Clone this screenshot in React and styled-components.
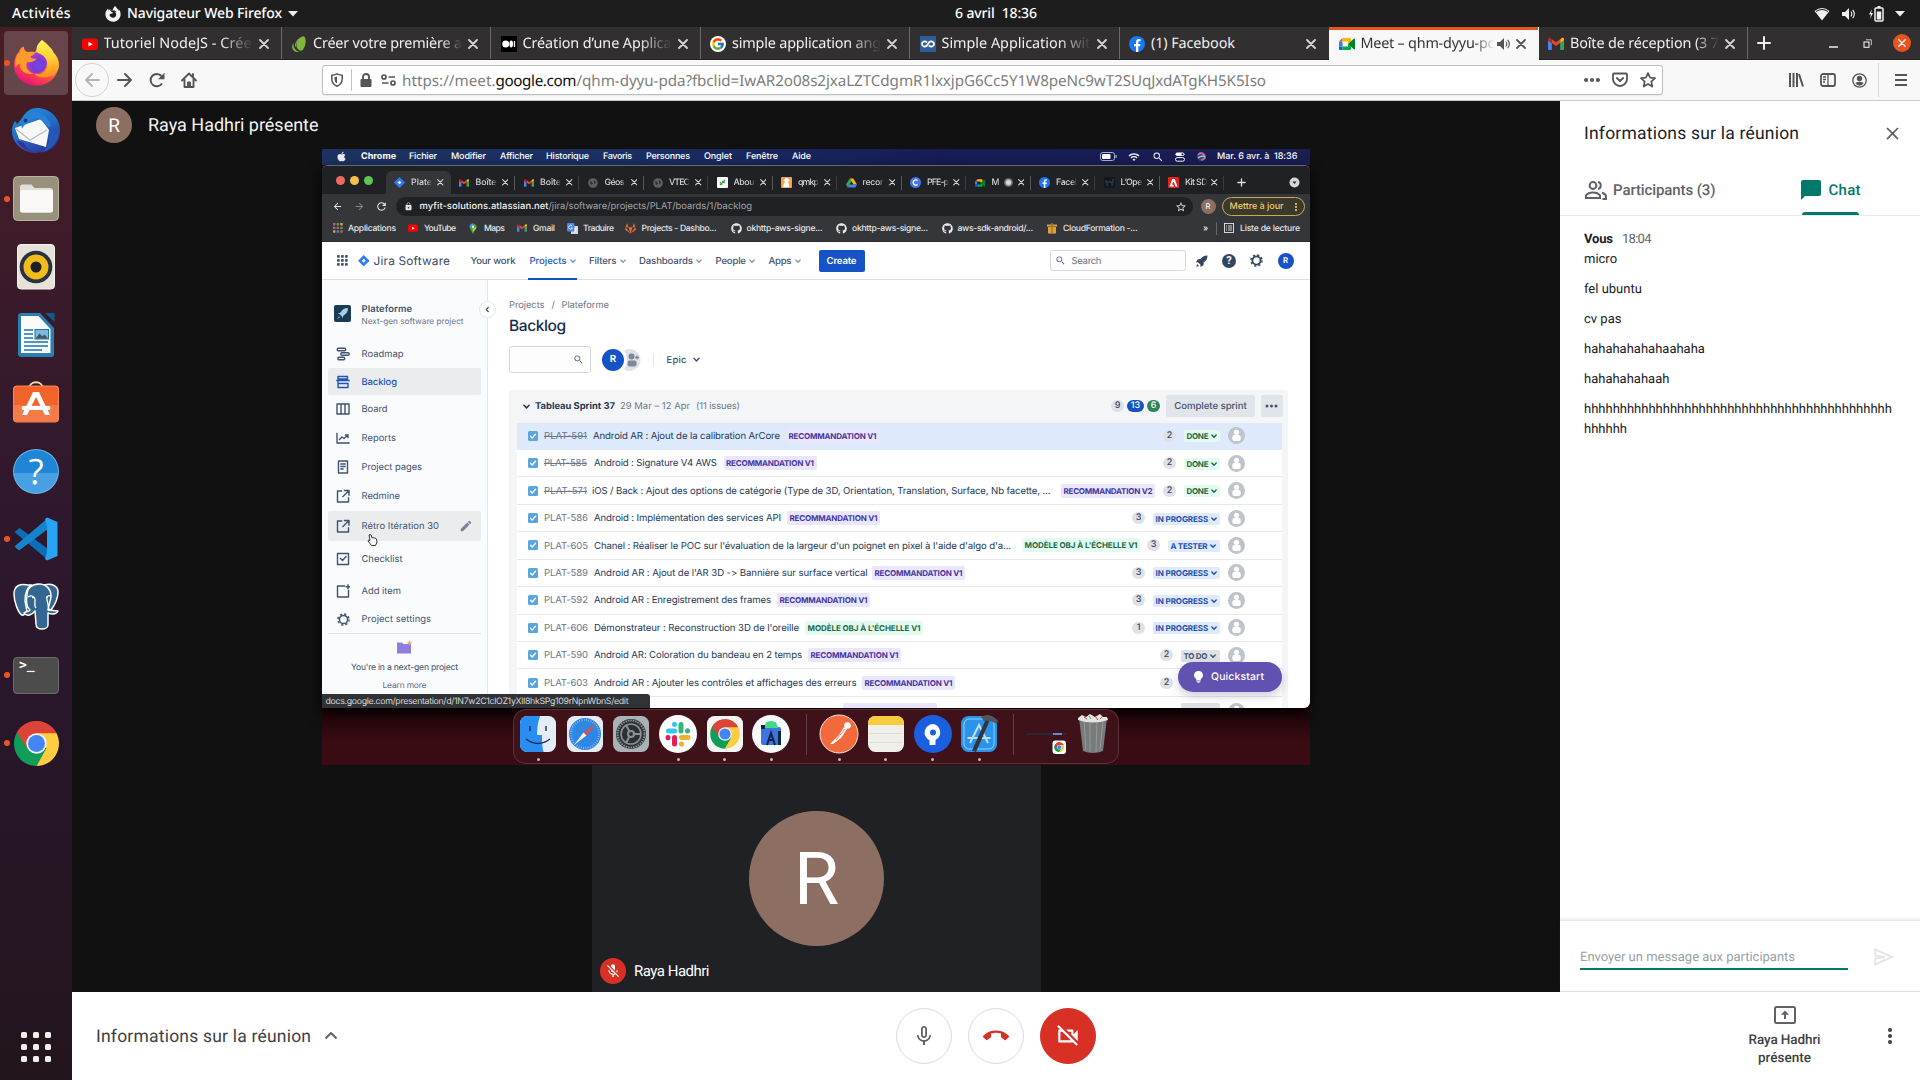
import React from 'react';
import styled, { createGlobalStyle } from 'styled-components';
import { FaApple, FaGithub, FaGitlab, FaFirefoxBrowser } from 'react-icons/fa';
import { FcGoogle } from 'react-icons/fc';
import {
  MdMicNone, MdCallEnd, MdMicOff, MdClose, MdMoreVert, MdOutlineVideocamOff, MdWifi,
  MdLock, MdStarBorder, MdRefresh, MdArrowBack, MdArrowForward, MdSearch, MdEdit,
} from 'react-icons/md';

const UBUNTU = '"Noto Sans", "Open Sans", sans-serif';
const ROBOTO = 'Roboto, "Liberation Sans", sans-serif';
const INTER = 'Inter, Roboto, sans-serif';

const GlobalStyle = createGlobalStyle`
  * { box-sizing: border-box; }
  html, body { margin: 0; padding: 0; background: #111; overflow: hidden; }
  body { font-family: ${ROBOTO}; text-rendering: geometricPrecision; }
  svg { display: block; flex: none; }
`;

/* ---------- text with a known measure ---------- */
const measurer = document.createElement('canvas').getContext('2d');
const tracking = (text, font, width) => {
  measurer.font = font;
  return (width - measurer.measureText(text).width) / Math.max(1, text.length - 1);
};

const Line = styled.span`
  display: block;
  flex: none;
  width: ${(p) => p.$w}px;
  margin-left: ${(p) => p.$ml || 0}px;
  font: ${(p) => p.$font};
  line-height: ${(p) => p.$lh}px;
  letter-spacing: ${(p) => p.$track.toFixed(3)}px;
  color: ${(p) => p.$color};
  white-space: pre;
  position: relative;
  top: ${(p) => (p.$dy === undefined ? 0.6 : p.$dy)}px;
  text-decoration: ${(p) => (p.$strike ? 'line-through' : 'none')};
  ${(p) => p.$fade && `
    width: ${p.$fade}px;
    overflow: hidden;
    mask-image: linear-gradient(to right, #000 ${p.$fade * (p.$from || 0.78)}px, transparent ${p.$fade}px);
  `}
`;

function Text({ children, w, size = 13, weight = 400, family = ROBOTO, color = '#fff', ml, lh, dy, strike, fade, from }) {
  const font = `${weight} ${size}px ${family}`;
  return (
    <Line $w={w} $ml={ml} $font={font} $lh={lh || Math.round(size * 1.4)} $color={color} $dy={dy}
      $track={tracking(children, font, w)} $strike={strike} $fade={fade} $from={from}>
      {children}
    </Line>
  );
}

const Icon = styled.span`
  display: flex;
  flex: none;
  align-items: center;
  justify-content: center;
  width: ${(p) => p.$s}px;
  height: ${(p) => p.$h || p.$s}px;
  margin-left: ${(p) => p.$ml || 0}px;
  color: ${(p) => p.$color || 'inherit'};
`;

const Push = styled.div`flex: 1;`;

/* ---------- desktop shell ---------- */
const Desktop = styled.div`
  width: 1920px;
  height: 1080px;
  display: flex;
  flex-direction: column;
  overflow: hidden;
`;
const TopBar = styled.header`
  height: 27px;
  flex: none;
  display: flex;
  align-items: center;
  background: #1d1d1d;
  padding: 0 12px;
  color: #f2f2f2;
`;
const Below = styled.div`flex: 1; display: flex; min-height: 0;`;
const Launcher = styled.nav`
  width: 72px;
  flex: none;
  padding: 4px 0 0 4px;
  display: flex;
  flex-direction: column;
  gap: 4px;
  background: linear-gradient(#471d22, #3c1b2a 22%, #2f182d 46%, #28162a 66%, #23151d);
`;
const LaunchItem = styled.div`
  width: 64px;
  height: 64px;
  border-radius: 4px;
  display: flex;
  align-items: center;
  background: ${(p) => (p.$active ? 'rgba(255,255,255,.18)' : 'transparent')};
`;
const RunDot = styled.i`
  width: 6px;
  height: 6px;
  border-radius: 50%;
  margin-right: 2px;
  background: ${(p) => (p.$on ? '#e95420' : 'transparent')};
`;
const AppsGrid = styled.div`
  margin: auto 0 18.500px 17px;
  display: grid;
  grid-template-columns: repeat(3, 6px);
  gap: 6px;
  i { width: 6px; height: 6px; border-radius: 1.5px; background: #efefec; }
`;

const Firefox = () => (
  <svg width="48" height="48" viewBox="0 0 48 48">
    <defs>
      <linearGradient id="ffa" x1=".8" y1=".1" x2=".3" y2="1"><stop offset="0" stopColor="#ffe14a" /><stop offset=".35" stopColor="#ff9a2e" /><stop offset=".65" stopColor="#ff4a3e" /><stop offset="1" stopColor="#e5127d" /></linearGradient>
      <linearGradient id="ffb" x1=".5" y1="0" x2=".6" y2="1"><stop offset="0" stopColor="#fff255" /><stop offset=".5" stopColor="#ffcf34" /><stop offset="1" stopColor="#ff8a22" /></linearGradient>
      <radialGradient id="ffc" cx=".6" cy=".6"><stop offset="0" stopColor="#6a4be0" /><stop offset=".6" stopColor="#7a3bd8" /><stop offset="1" stopColor="#a43ad0" /></radialGradient>
    </defs>
    <path d="M30 1c6 4 9 8 10 13 5 3 7.500 8 6.500 14C45 39 36 46.500 24.500 46.500 12 46.500 2 38 2 26c0-7 3-11.500 5-13 0-1.500 2-4.500 4.500-5.500C12 11 14 12.500 16 13c2-.5 5-.5 7 0z" fill="url(#ffa)" />
    <circle cx="24.500" cy="24" r="10.500" fill="url(#ffc)" />
    <path d="M30 1c-5 4-7 9-4 13 6 2 10 7 9.500 12-.5 7-7 10.500-13 8.500 4 6 20 6 24-5 1.500-6-1-12-5-16-1-5-7-7-11.500-12.500z" fill="url(#ffb)" />
    <path d="M11 9c0 3 2 4 5 4.500 2-.7 5-.6 7 .5-1 2-3 3-4.500 3.500.5 2 2.500 2.500 6.500 2-3 3.500-6 4-9.500 3.500-3 4 0 10 6 11.500-8 2-14-3-14-10-2 1-3 2-4 4C2.500 20 5 15 8.500 13c.3-1.500 1-3 2.500-4z" fill="#ff9a2b" />
  </svg>
);
const Thunderbird = () => (
  <svg width="50" height="50" viewBox="0 0 50 50">
    <defs><linearGradient id="tb" x1=".2" y1="0" x2=".8" y2="1"><stop offset="0" stopColor="#1c8fe0" /><stop offset=".5" stopColor="#2469c4" /><stop offset="1" stopColor="#2b2f95" /></linearGradient></defs>
    <path d="M11 12C15 5 20 2 26 2c13 0 23 10 23 22 0 11-6 20-16 22l-9 1C10 46 1 36 1 25c0-4 1-7 3-10l2 3z" fill="url(#tb)" />
    <path d="M4 22L30 13l8 11-3 17-27-8z" fill="#f7f7f8" />
    <path d="M5 23l14 11 17-10" fill="none" stroke="#b8b8c4" strokeWidth="1.200" />
    <path d="M12 13C16 6 24 4 31 8c6 4 9 9 9 15l-8-7c-5-5-10-5-15 0-3 3-5 4-6 7-1-4-1-7 1-10z" fill="#2a80d4" />
    <circle cx="14.500" cy="14.500" r="2" fill="#123c78" />
    <path d="M38 20c3 8 1 17-6 26 10-3 17-13 16-24-1 5-3 6-5 8 1-6-1-9-5-10z" fill="#2559b8" />
    <path d="M8 35l-2-1c2 6 9 11 16 12-6-3-8-6-9-9z" fill="#392e9c" />
  </svg>
);
const Files = () => (
  <svg width="46" height="46" viewBox="0 0 46 46">
    <rect x=".5" y=".5" width="45" height="44" rx="4" fill="#9a917c" stroke="#b9b3a2" />
    <path d="M7 11q0-2.500 2.500-2.500h9l3 3.500H37q3 0 3 3v19q0 2.500-2.500 2.500h-28Q7 36.500 7 34z" fill="#e2dfd4" />
    <rect x="7" y="14" width="33" height="22.500" rx="2.500" fill="#faf9f8" />
  </svg>
);
const Speaker = () => (
  <svg width="46" height="46" viewBox="0 0 46 46">
    <rect x="4.500" y=".5" width="37" height="44.500" rx="3.500" fill="#e6e2d9" stroke="#f6f3ec" />
    <circle cx="23" cy="23" r="16.300" fill="#2c3140" />
    <circle cx="23" cy="23" r="12.500" fill="#f0bd1a" />
    <circle cx="23" cy="23" r="5.500" fill="#1d2026" />
  </svg>
);
const Writer = () => (
  <svg width="46" height="46" viewBox="0 0 46 46">
    <path d="M8.500 1H27l14 15v26.500q0 2.500-2.500 2.500h-30Q5 45 5 42V4q0-3 3.500-3z" fill="#2a7fb0" />
    <path d="M8 4h17.500L37.500 17v24H8z" fill="#f8fafb" />
    <path d="M32 1h9.500v9z" fill="#0f5a8c" />
    <path d="M11 18h9M11 22h9M11 26h9M11 30h24M11 34h24M11 38h18" stroke="#1b76ab" strokeWidth="1.700" />
    <rect x="22" y="17.500" width="13.500" height="9.500" fill="#7bb8da" stroke="#1b76ab" />
    <path d="M22.500 26.500l4-5 3 3 2-2 3.500 4z" fill="#455560" />
  </svg>
);
const Software = () => (
  <svg width="46" height="46" viewBox="0 0 46 46">
    <path d="M16 9c0-9 14-9 14 0" fill="none" stroke="#f5d7b0" strokeWidth="1.800" />
    <rect x=".5" y="6" width="45" height="36" rx="3" fill="#f2632c" stroke="#f58a58" />
    <path d="M1 25h44v14q0 2.500-2.500 2.500h-39Q1 41.500 1 39z" fill="#f47a48" />
    <path d="M20 12h6l11 23h-5l-2-4-7-14-7 14-2 4H9z" fill="#fff" />
    <rect x="8.500" y="26" width="29" height="4" rx="2" fill="#fff" />
  </svg>
);
const HelpBadge = styled.div`
  width: 46px;
  height: 45px;
  border-radius: 50%;
  border: 1px solid #6cb8ec;
  background: linear-gradient(#1f85d6 53%, #46a0e2 53%);
  color: #fff;
  display: flex;
  align-items: center;
  justify-content: center;
  font: 400 35px/45px "Open Sans", sans-serif;
`;
const VSCode = () => (
  <svg width="46" height="46" viewBox="0 0 46 46">
    <path d="M1.500 17l5-4L35 34v11z" fill="#0a6fb7" transform="translate(0 -1)" />
    <path d="M1.500 30.500l4.500 4L35 13V2z" fill="#1484cf" />
    <path d="M34 1.500l10.500 4.500v34L34 44.500 32 43l2-7V10l-2-7z" fill="#27a3f3" />
  </svg>
);
const Postgres = () => (
  <svg width="48" height="48" viewBox="0 0 48 48">
    <g fill="#336791" stroke="#fff" strokeWidth="1.500" strokeLinejoin="round">
      <path d="M16 2C8 0 2 3 2 11c0 7 4 19 8 21 2 1 3-1 5-4l-2-10c0-7 1-13 7-16z" />
      <path d="M32 2c8-2 14 1 14 7 0 7-4 14-7 18l-7-2z" />
      <path d="M15 12C15 5 20 1 27 1c7 0 12 5 12 12 0 5-3 10-3 14l10 1c-2 4-7 3-10 2v12c0 5-12 6-12-1l-1-13c-3 4-8 6-11 2 2-2 5-1 6-3-4-3-4-9-3-15z" />
    </g>
    <path d="M16 14c3-2 7-1 7 3 0 3-1 6 1 8M39 13c-3-1-5 1-4 4s1 6 2 9" fill="none" stroke="#fff" strokeWidth="1.300" />
    <circle cx="21" cy="14.500" r="1" fill="#fff" /><circle cx="35" cy="14" r="1" fill="#fff" />
  </svg>
);
const TerminalBox = styled.div`
  width: 46px;
  height: 37px;
  border-radius: 4px;
  border: 1px solid #6b6b6b;
  background: #4c4c4c;
  color: #fff;
  padding: 0 0 0 5px;
  font: 700 13px/16px "DejaVu Sans Mono", monospace;
`;
const ChromeLogo = ({ s }) => (
  <svg width={s} height={s} viewBox="0 0 48 48">
    <path d="M24 24L4.100 12.500A23 23 0 0 1 43.900 12.500z" fill="#db4437" />
    <path d="M4.100 12.500A23 23 0 0 0 24 47l10-17.200L24 24z" fill="#0f9d58" />
    <path d="M43.900 12.500A23 23 0 0 1 24 47l10-18-10-16.500z" fill="#ffcd40" />
    <path d="M4.100 12.500L14 29.500 24 34l-5-10 5-10z" fill="#0f9d58" />
    <path d="M24 13.500h20.400A23 23 0 0 0 4.100 12.500L13.500 28 19 15z" fill="#db4437" />
    <circle cx="24" cy="24" r="10.500" fill="#f1f1f1" />
    <circle cx="24" cy="24" r="8.600" fill="#4285f4" />
  </svg>
);

const launcher = [
  [<Firefox />, true, true], [<Thunderbird />, false], [<Files />, true], [<Speaker />, false], [<Writer />, false],
  [<Software />, false], [<HelpBadge>?</HelpBadge>, false], [<VSCode />, true], [<Postgres />, false],
  [<TerminalBox>{'>_'}</TerminalBox>, true], [<ChromeLogo s={47} />, true],
];

/* ---------- Firefox window ---------- */
const Browser = styled.main`flex: 1; min-width: 0; display: flex; flex-direction: column;`;
const TabStrip = styled.div`
  height: 33px;
  flex: none;
  display: flex;
  background: #322f30;
  border-bottom: 1px solid #232122;
`;
const Tab = styled.div`
  width: 209.500px;
  height: ${(p) => (p.$active ? 33 : 32)}px;
  flex: none;
  display: flex;
  align-items: center;
  padding-top: ${(p) => (p.$active ? 0.5 : 1.5)}px;
  padding-left: 9.500px;
  border-right: 1px solid ${(p) => (p.$plain ? 'transparent' : '#69686a')};
  background: ${(p) => (p.$active ? '#f8f8f8' : 'transparent')};
  box-shadow: ${(p) => (p.$active ? 'inset 0 3px #e95420' : 'none')};
`;
const TitleArea = styled.div`width: ${(p) => p.$w}px; flex: none; overflow: hidden; margin-left: 6px;`;
const WinControls = styled.div`flex: 1; display: flex; align-items: center; padding-right: 9px; color: #eee;`;
const CloseDisc = styled.div`
  width: 18px;
  height: 18px;
  margin-left: 21px;
  border-radius: 50%;
  background: #e95420;
  display: flex;
  align-items: center;
  justify-content: center;
`;
const Toolbar = styled.div`
  height: 41px;
  flex: none;
  display: flex;
  align-items: center;
  padding-left: 3px;
  background: #f8f8f8;
  border-bottom: 1px solid #cbcbcb;
  color: #555;
`;
const BackDisc = styled.div`
  width: 34px;
  height: 34px;
  border-radius: 50%;
  border: 1px solid #d2d2d2;
  display: flex;
  align-items: center;
  justify-content: center;
  color: #b3b3b3;
`;
const UrlBar = styled.div`
  width: 1341px;
  height: 30px;
  margin-left: 125px;
  display: flex;
  align-items: center;
  background: #fff;
  border: 1px solid #bdbdbd;
  border-radius: 3px;
  box-shadow: 0 1px 1px rgba(0,0,0,.06);
`;
const UrlText = styled.div`display: flex; margin-left: 6px;`;
const Rule = styled.i`
  flex: none;
  width: 1px;
  height: ${(p) => p.$h}px;
  margin-left: ${(p) => p.$ml || 0}px;
  background: ${(p) => p.$c};
`;

const Stroke = ({ s = 16, vb = 16, sw = 2, d, fill = 'none', cap = 'round' }) => (
  <svg width={s} height={s} viewBox={`0 0 ${vb} ${vb}`} fill={fill} stroke="currentColor" strokeWidth={sw} strokeLinecap={cap} strokeLinejoin="round"><path d={d} /></svg>
);
const CloseX = ({ s = 10, sw = 1.8 }) => <Stroke s={s} vb={10} sw={sw} d="M1 1l8 8M9 1l-8 8" />;
const Chevron = ({ s = 6, sw = 1.2 }) => <Stroke s={s} vb={6} sw={sw} d="M.8 2l2.200 2.200L5.200 2" />;

const YouTube = ({ s = 16 }) => <svg width={s} height={s} viewBox="0 0 16 16"><rect y="2.500" width="16" height="11.500" rx="3" fill="#f00" /><path d="M6.500 5.800v4.800l4.200-2.400z" fill="#fff" /></svg>;
const Envato = () => <svg width="16" height="16" viewBox="0 0 16 16"><path d="M12.500.2C9 .5 4 5 4 9.500 4 11 5 11 5 11S4.500 7 7 4C5 7 4.500 12 8 14c1 1 3 1 4-.5C15.500 9 15.500 1 12.500.2zM2.500 7C0 10 1 15 5.500 16h3C4.500 14.500 2 12 2.500 7z" fill="#7eb83c" /></svg>;
const Medium = () => <svg width="16" height="16" viewBox="0 0 16 16"><rect width="16" height="16" fill="#000" /><circle cx="4.700" cy="8" r="3.500" fill="#fff" /><ellipse cx="10.200" cy="8" rx="1.800" ry="3.400" fill="#fff" /><rect x="12.800" y="5" width="1.300" height="6" fill="#fff" /></svg>;
const Coding = () => <svg width="16" height="16" viewBox="0 0 16 16"><rect width="16" height="16" fill="#2f5f98" /><path d="M7 6.500C5 4.500 2 5.500 2 8s3 3.500 5 1.500L9 6.500c2-2 5-1 5 1.500s-3 3.500-5 1.500" fill="none" stroke="#fff" strokeWidth="1.800" /></svg>;
const Facebook = ({ s = 16 }) => <svg width={s} height={s} viewBox="0 0 16 16"><circle cx="8" cy="8" r="8" fill="#1877f2" /><path d="M7 16v-5.700H5V8h2V6.300C7 4.200 8.200 3.100 10 3.100l1.600.1v2h-1c-1 0-1.300.6-1.300 1.200V8h2.200l-.4 2.300H9.300V16z" fill="#fff" /></svg>;
const MeetLogo = ({ s = 16 }) => <svg width={s} height={s} viewBox="0 0 16 16"><path d="M0 5.500L3.500 2v3.500z" fill="#ea4335" /><path d="M0 5.500h3.500v5H0z" fill="#2684fc" /><path d="M0 10.500V13q0 1 1 1h2.500v-3.500z" fill="#0066da" /><path d="M3.500 2H11q1 0 1 1v2.500L9 8V5.500H3.500z" fill="#ffba00" /><path d="M3.500 10.500H9V8l3 2.500V13q0 1-1 1H3.500z" fill="#00ac47" /><path d="M9 8l5.500-5q1.500-1 1.500.5v9q0 1.500-1.500.5z" fill="#00832d" /></svg>;
const GmailLogo = ({ s = 16 }) => <svg width={s} height={s} viewBox="0 0 16 16"><path d="M1 14h2.800V7L0 4.300V13q0 1 1 1z" fill="#4285f4" /><path d="M12.200 14H15q1 0 1-1V4.300L12.200 7z" fill="#34a853" /><path d="M12.200 3.500V7L16 4.300V3.500c0-1.800-1.500-2-2.500-1.300z" fill="#fbbc04" /><path d="M3.800 7V3.200L8 6.300l4.200-3.100V7L8 10z" fill="#ea4335" /><path d="M0 3.500v.8L3.800 7V3.200L2.500 2.200C1.500 1.500 0 1.700 0 3.500z" fill="#c5221f" /></svg>;
const SpeakerIcon = () => <svg width="14" height="14" viewBox="0 0 14 14"><path d="M0 5h3l4-4v12L3 9H0z" fill="currentColor" /><path d="M8.800 4.500q2 2.500 0 5M10.700 2.800q3.300 4.200 0 8.400" fill="none" stroke="currentColor" strokeWidth="1.100" /></svg>;

const tabs = [
  { icon: <YouTube />, t: 'Tutoriel NodeJS - Crée', w: 148, fade: 149, from: 0.78 },
  { icon: <Envato />, t: 'Créer votre première a', w: 149, fade: 149, from: 0.86 },
  { icon: <Medium />, t: 'Création d’une Applica', w: 149, fade: 149 },
  { icon: <FcGoogle size={16} />, disc: true, t: 'simple application ang', w: 149, fade: 149 },
  { icon: <Coding />, t: 'Simple Application wit', w: 149, fade: 149 },
  { icon: <Facebook />, t: '(1) Facebook', w: 84 },
  { icon: <MeetLogo />, t: 'Meet – qhm-dyyu-pc', w: 134, fade: 134, active: true, from: 0.84 },
  { icon: <GmailLogo />, t: 'Boîte de réception (3 7', w: 149, fade: 149, from: 0.84 },
];
const GoogleDisc = styled.div`
  width: 16px;
  height: 16px;
  border-radius: 50%;
  background: #fff;
  display: flex;
  align-items: center;
  justify-content: center;
`;

/* ---------- Meet ---------- */
const Meeting = styled.div`height: 891px; flex: none; display: flex;`;
const Stage = styled.section`
  width: 1488px;
  flex: none;
  background: #111;
  display: flex;
  flex-direction: column;
`;
const Presenter = styled.div`height: 48px; flex: none; display: flex; align-items: center; padding-left: 24px;`;
const Initial = styled.div`
  width: ${(p) => p.$s}px;
  height: ${(p) => p.$s}px;
  flex: none;
  margin-left: ${(p) => p.$ml || 0}px;
  border-radius: 50%;
  background: ${(p) => p.$bg || '#8d6e63'};
  color: #fff;
  display: flex;
  align-items: center;
  justify-content: center;
  padding-top: ${(p) => (p.$f > 50 ? 2 : 0)}px;
  font: ${(p) => p.$weight || 400} ${(p) => p.$f}px/1 ${ROBOTO};
`;
const Shared = styled.div`
  width: 988px;
  height: 616px;
  flex: none;
  margin-left: 250px;
  display: flex;
  flex-direction: column;
  background: #3a0b13;
`;
const Participant = styled.div`
  width: 449px;
  flex: 1;
  margin-left: 520px;
  background: #202124;
  display: flex;
  flex-direction: column;
  align-items: center;
  padding-top: 46px;
`;
const NameRow = styled.div`
  width: 100%;
  margin-top: 12px;
  padding-left: 8px;
  display: flex;
  align-items: center;
`;
const MutedBadge = styled.div`
  width: 26px;
  height: 26px;
  border-radius: 50%;
  background: #d93025;
  display: flex;
  align-items: center;
  justify-content: center;
`;
const Controls = styled.footer`
  height: 88px;
  flex: none;
  display: flex;
  align-items: center;
  background: #fff;
  padding-left: 24px;
`;
const RoundButton = styled.button`
  width: 56px;
  height: 56px;
  margin: 0;
  margin-left: ${(p) => p.$ml}px;
  padding: 0;
  border-radius: 50%;
  border: 1px solid ${(p) => (p.$red ? '#d93025' : '#dadce0')};
  background: ${(p) => (p.$red ? '#d93025' : '#fff')};
  color: ${(p) => p.$color};
  display: flex;
  align-items: center;
  justify-content: center;
`;
const PresentBlock = styled.div`width: 84px; margin-left: 647px; display: flex; flex-direction: column; align-items: center; padding-bottom: 6px;`;
const Panel = styled.aside`
  flex: 1;
  background: #fff;
  display: flex;
  flex-direction: column;
  border-bottom: 1px solid #e4e4e4;
`;
const PanelHead = styled.div`height: 63px; flex: none; display: flex; align-items: center; padding: 1px 17.500px 0 24px; justify-content: space-between;`;
const PanelTabs = styled.div`height: 52px; flex: none; display: flex; border-bottom: 1px solid #e8eaed; padding-left: 24px;`;
const PanelTab = styled.div`
  height: 51px;
  display: flex;
  align-items: center;
`;
const ChatTab = styled.div`margin-left: 85px; height: 51px; display: flex; flex-direction: column;`;
const ChatLabel = styled.div`height: 48px; padding-top: 3px; display: flex; align-items: center;`;
const Underline = styled.i`height: 3px; width: 57px; margin-left: 1px; background: #00796b; border-radius: 3px 3px 0 0;`;
const Messages = styled.div`flex: 1; padding: 13px 24px;`;
const MsgHead = styled.div`display: flex;`;
const Msg = styled.p`
  margin: 0 0 10px;
  width: 311px;
  position: relative;
  top: 0.600px;
  font: 400 13px/20px ${ROBOTO};
  color: #202124;
  word-break: break-all;
`;
const Composer = styled.div`
  height: 71px;
  display: flex;
  align-items: center;
  padding: 1px 0 0 20px;
  border-top: 1px solid #e8eaed;
  box-shadow: 0 -1px 3px rgba(60,64,67,.12);
`;
const Field = styled.div`width: 268px; height: 26px; border-bottom: 2px solid #00796b; display: flex; align-items: center; padding-top: 4px;`;

/* ---------- shared macOS screen ---------- */
const MacMenu = styled.div`
  height: 16px;
  flex: none;
  display: flex;
  align-items: center;
  padding: 0 0 1px 14px;
  background: linear-gradient(90deg, #1d325e, #1b2f63 30%, #171c56 62%, #1a1e52);
  color: #f0f2f8;
`;
const MacWindow = styled.div`
  height: 543px;
  flex: none;
  display: flex;
  flex-direction: column;
  overflow: hidden;
  position: relative;
  background: #202124;
  border-top: 1px solid #65686c;
  border-radius: 6px 6px 6px 0;
  box-shadow: 0 6px 14px rgba(0,0,0,.85);
`;
const ChromeTabs = styled.div`height: 28px; flex: none; display: flex; align-items: flex-end; background: #202124; color: #dfe0e2;`;
const Lights = styled.div`
  width: 64px;
  height: 28px;
  display: flex;
  align-items: center;
  gap: 5px;
  padding: 0 0 0 14px;
  i { width: 9px; height: 9px; border-radius: 50%; background: #ed6a5e; }
  i:nth-child(2) { background: #f5bf4f; }
  i:nth-child(3) { background: #61c554; }
`;
const CTab = styled.div`
  width: 64.500px;
  height: 23px;
  flex: none;
  display: flex;
  align-items: center;
  padding-left: 8px;
  border-radius: 6px 6px 0 0;
  color: #d4d5d7;
  background: ${(p) => (p.$active ? '#35363a' : 'transparent')};
`;
const ChromeBar = styled.div`height: 24px; flex: none; display: flex; align-items: center; background: #35363a; padding: 1px 0 0 10px; color: #dfe0e2;`;
const Omni = styled.div`
  width: 797px;
  height: 19px;
  margin-left: 8.500px;
  border-radius: 10px;
  background: #202124;
  display: flex;
  align-items: center;
  padding: 0 6px 0 8px;
`;
const UpdatePill = styled.div`
  width: 83px;
  height: 19px;
  margin-left: 6px;
  border-radius: 10px;
  border: 1px solid #c9ab55;
  background: #3b382c;
  color: #f0cd66;
  display: flex;
  align-items: center;
  padding-left: 7px;
`;
const Bookmarks = styled.div`height: 24px; flex: none; display: flex; align-items: center; background: #35363a; padding: 0 0 2.500px 10px; color: #e6e7e9; border-bottom: 1px solid #2b2c2f;`;
const JiraNav = styled.div`height: 38px; flex: none; display: flex; align-items: center; background: #fff; border-bottom: 1px solid #dcdee3; padding-left: 15px; color: #42526e;`;
const NavActive = styled.div`
  width: 49px;
  height: 38px;
  margin-left: 12.500px;
  display: flex;
  align-items: center;
  padding-left: 1.500px;
  box-shadow: inset 0 -2px #0c53c4;
  color: #0c53c4;
`;
const CreateButton = styled.div`width: 46px; height: 22px; margin-left: 18px; background: #1553c7; border-radius: 2px; display: flex; align-items: center; padding-left: 8px;`;
const SearchBox = styled.div`
  width: ${(p) => p.$w}px;
  height: ${(p) => p.$h}px;
  flex: none;
  border: 1px solid #d4d7dd;
  border-radius: 2.500px;
  display: flex;
  align-items: center;
  background: #fdfdfd;
  color: #5d6a80;
`;
const JiraBody = styled.div`flex: 1; display: flex; min-height: 0; background: #fff;`;
const Side = styled.div`width: 166px; flex: none; background: #fafbfc; border-right: 1px solid #e3e5e9; padding: 15px 6px 0; position: relative;`;
const ProjectHead = styled.div`height: 60px; display: flex; padding: 10px 0 0 6px;`;
const ProjectNames = styled.div`margin: -2px 0 0 10.500px; display: flex; flex-direction: column;`;
const SideItem = styled.div`
  width: 153px;
  height: ${(p) => p.$h}px;
  margin-top: ${(p) => p.$mt || 0}px;
  display: flex;
  align-items: center;
  padding-left: 8px;
  border-radius: 2px;
  background: ${(p) => (p.$bg ? '#ebecee' : 'transparent')};
  color: ${(p) => (p.$blue ? '#2255b8' : '#42526e')};
`;
const SideFoot = styled.div`width: 153px; border-top: 1px solid #dfe1e6; display: flex; flex-direction: column; align-items: center; padding-top: 6px; gap: 7px;`;
const Collapse = styled.div`
  position: absolute;
  right: -9px;
  top: 21px;
  width: 17px;
  height: 17px;
  border-radius: 50%;
  background: #fff;
  border: 1px solid #e3e5e9;
  color: #42526e;
  display: flex;
  align-items: center;
  justify-content: center;
  z-index: 2;
`;
const Main = styled.div`flex: 1; padding: 18px 0 0 21px; display: flex; flex-direction: column;`;
const Crumbs = styled.div`height: 14px; flex: none; display: flex; align-items: center;`;
const Heading = styled.div`height: 24px; flex: none; margin-top: 1px; display: flex; align-items: center;`;
const Filters = styled.div`height: 27px; flex: none; margin-top: 9px; display: flex; align-items: center;`;
const Sprint = styled.div`width: 779px; flex: 1; min-height: 0; overflow: hidden; margin-top: 17px; background: #f4f5f7; border-radius: 3px 3px 0 0; padding-left: 8px;`;
const SprintHead = styled.div`height: 32.500px; display: flex; align-items: center; padding: 0 5.500px 0 6px;`;
const CountPill = styled.div`
  width: ${(p) => p.$w || 13}px;
  height: 12px;
  flex: none;
  margin-left: ${(p) => p.$ml || 0}px;
  border-radius: 6px;
  background: ${(p) => p.$bg || '#dfe1e6'};
  color: ${(p) => p.$c || '#344563'};
  display: flex;
  align-items: center;
  justify-content: center;
  font: 500 9px/12px ${INTER};
`;
const GreyButton = styled.div`
  width: ${(p) => p.$w}px;
  height: 22px;
  margin-left: ${(p) => p.$ml}px;
  background: #e1e4e8;
  border-radius: 2px;
  display: flex;
  align-items: center;
  justify-content: center;
  color: #42526e;
`;
const Row = styled.div`
  width: 765px;
  height: 27.450px;
  display: flex;
  align-items: center;
  padding: 0 37px 0 11px;
  background: ${(p) => (p.$on ? '#deeafb' : '#fff')};
  border-bottom: 1px solid ${(p) => (p.$on ? '#deeafb' : '#e6e8ec')};
`;
const Check = styled.div`width: 10px; height: 10px; flex: none; border-radius: 1.500px; background: #57a6dd; color: #fff; display: flex; align-items: center; justify-content: center;`;
const Epic = styled.div`
  width: ${(p) => p.$w}px;
  height: 14px;
  flex: none;
  margin-left: ${(p) => p.$ml}px;
  border-radius: 2px;
  background: ${(p) => (p.$green ? '#e3fcef' : '#eae6fd')};
  display: flex;
  align-items: center;
  padding-left: 2.500px;
`;
const tones = { done: ['#e3fcef', '#1d6a4a'], prog: ['#dfebfd', '#1c4fae'], todo: ['#dfe1e6', '#42526e'] };
const Status = styled.div`
  width: ${(p) => p.$w}px;
  height: 12px;
  flex: none;
  margin-left: 8px;
  position: relative;
  top: 0.500px;
  border-radius: 2px;
  background: ${(p) => tones[p.$tone][0]};
  color: ${(p) => tones[p.$tone][1]};
  display: flex;
  align-items: center;
  padding-left: 2.500px;
`;
const Quickstart = styled.div`
  position: absolute;
  right: 28px;
  bottom: 16px;
  width: 104px;
  height: 30px;
  border-radius: 15px;
  background: #6151b1;
  box-shadow: 0 4px 10px rgba(60,50,110,.25);
  display: flex;
  align-items: center;
  padding-left: 16px;
  color: #fff;
`;
const StatusUrl = styled.div`
  position: absolute;
  left: 0;
  bottom: 0;
  width: 328px;
  height: 14.500px;
  background: #303236;
  border-radius: 0 3px 0 0;
  display: flex;
  align-items: center;
  padding-left: 3.500px;
  z-index: 3;
`;
const Pointer = styled.div`position: absolute; left: 45px; top: 368px; z-index: 4;`;
const DockArea = styled.div`flex: 1; padding: 1px 0 0 191px; background: linear-gradient(rgba(10,0,3,.6), rgba(58,11,19,0) 60%);`;
const Dock = styled.div`
  position: relative;
  width: 606px;
  height: 55px;
  border-radius: 13px;
  border: 1px solid rgba(255,255,255,.14);
  background: #3f1119;
  display: flex;
  align-items: flex-start;
  padding: 4px 0 0 0.700px;
`;
const DockItem = styled.div`
  width: ${(p) => p.$w || 46.7}px;
  height: 50px;
  flex: none;
  display: flex;
  flex-direction: column;
  align-items: center;
  > i { width: 3px; height: 3px; margin-top: 4px; border-radius: 50%; background: ${(p) => (p.$on ? '#cbb2b6' : 'transparent')}; }
`;
const DockRule = styled.i`flex: none; width: 1px; height: 41px; background: rgba(255,255,255,.2); margin-left: ${(p) => p.$ml}px; margin-right: ${(p) => p.$mr}px;`;

const mac = { family: INTER, size: 9, weight: 500, lh: 12 };
const MacMenuBar = () => (
  <MacMenu>
    <FaApple size={11} />
    <Text {...mac} weight={700} ml={14} w={35}>Chrome</Text>
    <Text {...mac} ml={13} w={28}>Fichier</Text>
    <Text {...mac} ml={14} w={35}>Modifier</Text>
    <Text {...mac} ml={14} w={33}>Afficher</Text>
    <Text {...mac} ml={13} w={43}>Historique</Text>
    <Text {...mac} ml={14} w={29}>Favoris</Text>
    <Text {...mac} ml={14} w={44}>Personnes</Text>
    <Text {...mac} ml={14} w={28}>Onglet</Text>
    <Text {...mac} ml={14} w={32}>Fenêtre</Text>
    <Text {...mac} ml={14} w={19}>Aide</Text>
    <Icon $s={17} $h={9} $ml={288.500}><svg width="17" height="9" viewBox="0 0 17 9"><rect x=".5" y=".5" width="14" height="8" rx="2.200" fill="none" stroke="#aeb4cf" /><rect x="2" y="2" width="8.500" height="5" rx="1" fill="#fff" /><rect x="15.500" y="3" width="1.200" height="3" fill="#aeb4cf" /></svg></Icon>
    <Icon $s={12} $ml={11.500}><MdWifi size={12} /></Icon>
    <Icon $s={11} $ml={12}><MdSearch size={12} /></Icon>
    <Icon $s={10} $ml={12}><svg width="10" height="10" viewBox="0 0 10 10"><rect x=".5" y=".5" width="9" height="3.600" rx="1.800" fill="#fff" /><rect x=".5" y="5.600" width="9" height="3.600" rx="1.800" fill="none" stroke="#fff" /><circle cx="7.500" cy="2.300" r="1.100" fill="#1a1e52" /></svg></Icon>
    <Icon $s={9} $ml={12}><svg width="9" height="9" viewBox="0 0 9 9"><circle cx="4.500" cy="4.500" r="4.500" fill="#40407a" /><path d="M1 3q3-4 6 0T4 8" fill="none" stroke="#e0708c" strokeWidth="1.500" /><path d="M1 6q4-3 7-1" fill="none" stroke="#8fe0ea" strokeWidth="1.300" /></svg></Icon>
    <Text {...mac} ml={11} w={80.5}>Mar. 6 avr. à  18:36</Text>
  </MacMenu>
);

const JiraMark = ({ s = 11 }) => <svg width={s} height={s} viewBox="0 0 12 12"><path d="M6 0l6 6-6 6-6-6z" fill="#2f7cf0" /><path d="M6 4l2 2-2 2-2-2z" fill="#fff" /></svg>;
const Globe = () => <svg width="10" height="10" viewBox="0 0 10 10"><circle cx="5" cy="5" r="4.800" fill="#5d6064" /><path d="M2 3l2 1 1 2-2 1zM6 2l2 2-1 2-1-1z" fill="#2a2b2e" /></svg>;
const Drive = () => <svg width="11" height="10" viewBox="0 0 22 20"><path d="M7.500 1h7L22 13h-7z" fill="#fbbc04" /><path d="M7.500 1L0 13l3.500 6L11 7z" fill="#34a853" /><path d="M3.500 19h15L22 13H7z" fill="#4285f4" /></svg>;
const sq = (bg, inner) => <svg width="11" height="11" viewBox="0 0 11 11"><rect width="11" height="11" rx="1" fill={bg} />{inner}</svg>;
const chromeTabs = [
  [<JiraMark />, 'Plate', 21],
  [<GmailLogo s={10} />, 'Boîte', 21], [<GmailLogo s={10} />, 'Boîte', 21], [<Globe />, 'Géos', 20], [<Globe />, 'VTEC', 21],
  [sq('#fff', <path d="M3 8l5-5M3 5l2 3M5 4l3 2" stroke="#45a049" strokeWidth="1.300" />), 'Abou', 21],
  [sq('#f2a24a', <path d="M2.500 10c0-3 1-4 2-5a2 2 0 1 1 2 0c1 1 1.500 2 1.500 5zM7 2q2 1 2 3" fill="#fff" stroke="#fff" strokeWidth=".5" />), 'qmkp', 21],
  [<Drive />, 'recor', 21],
  [<svg width="11" height="11" viewBox="0 0 11 11"><circle cx="5.500" cy="5.500" r="5.500" fill="#4678e8" /><path d="M7.500 3.500A2.600 2.600 0 1 0 7.500 7.500" fill="none" stroke="#fff" strokeWidth="1.200" /></svg>, 'PFE-p', 22],
  [<MeetLogo s={10} />, 'M', 7], [<Facebook s={11} />, 'Facel', 21],
  [sq('#14171b', <path d="M3 9V5h5v4M2 3v3M9 2v4" stroke="#2a4a66" fill="none" />), 'L’Ope', 22],
  [sq('#e0261c', <path d="M1.500 9.500L4.300 2h2.400l2.800 7.500H7.500L5.500 4.500l-1.700 3H5l1 2z" fill="#fff" />), 'Kit SD', 22.5],
];
const TabLabel = styled.div`width: 21px; margin-left: 6px; display: flex; align-items: center; gap: 4px;`;
const TabDisc = styled.i`width: 9px; height: 9px; flex: none; border-radius: 50%; background: #d8d8d8; border: 1px solid #56585b; box-shadow: inset 0 0 0 1px #8f9194;`;

const bm = { family: INTER, size: 8.6, weight: 500, lh: 12, color: '#e6e7e9' };
const AppsDots = ({ s, colors = ['currentColor'] }) => (
  <svg width={s} height={s} viewBox="0 0 11 11">{[0, 1, 2, 3, 4, 5, 6, 7, 8].map((n) => <rect key={n} x={(n % 3) * 4} y={Math.floor(n / 3) * 4} width="2.700" height="2.700" rx=".4" fill={colors[n % colors.length]} />)}</svg>
);

const ChromeHeader = () => (
  <>
    <ChromeTabs>
      <Lights><i /><i /><i /></Lights>
      {chromeTabs.map(([icon, label, w], n) => (
        <CTab key={n} $active={n === 0}>
          <Icon $s={11}>{icon}</Icon>
          <TabLabel>
            <Text {...mac} size={8.8} color="#d4d5d7" w={w} fade={label === 'M' ? 8 : Math.max(21, w)} from={0.75}>{label}</Text>
            {label === 'M' && <TabDisc />}
          </TabLabel>
          <Icon $s={7} $ml={5}><CloseX s={6.5} sw={1.7} /></Icon>
          {n > 0 && <Rule $h={14} $ml={5} $c={n % 2 ? '#55585c' : '#3a3c40'} />}
        </CTab>
      ))}
      <Icon $s={9} $h={23} $ml={12}><Stroke s={9} vb={10} sw={1.5} d="M5 1v8M1 5h8" /></Icon>
      <Push />
      <Icon $s={11} $h={23}><svg width="11" height="11" viewBox="0 0 11 11"><circle cx="5.500" cy="5.500" r="5" fill="#d5d6d8" /><path d="M3.500 4.500h4l-2 2.500z" fill="#202124" /></svg></Icon>
      <Rule $h={1} $ml={9} $c="transparent" />
    </ChromeTabs>
    <ChromeBar>
      <Icon $s={11}><MdArrowBack size={11} /></Icon>
      <Icon $s={11} $ml={11} $color="#85878a"><MdArrowForward size={11} /></Icon>
      <Icon $s={12} $ml={10}><MdRefresh size={13} /></Icon>
      <Omni>
        <Icon $s={9}><MdLock size={9} /></Icon>
        <Text {...mac} size={9.4} color="#f0f0f1" ml={7} w={129}>myfit-solutions.atlassian.net</Text>
        <Text {...mac} size={9.4} weight={400} color="#a3a5a8" w={203.500}>/jira/software/projects/PLAT/boards/1/backlog</Text>
        <Push />
        <MdStarBorder size={12} />
      </Omni>
      <Initial $s={15} $f={8} $ml={8}>R</Initial>
      <UpdatePill>
        <Text {...mac} color="#f0cd66" w={54}>Mettre à jour</Text>
        <Icon $s={10} $ml={7}><MdMoreVert size={12} /></Icon>
      </UpdatePill>
    </ChromeBar>
    <Bookmarks>
      <Icon $s={11}><AppsDots s={10} colors={['#d25a4e', '#5b9b5f', '#d8a646', '#5583cf']} /></Icon>
      <Text {...bm} ml={5} w={48}>Applications</Text>
      <Icon $s={10} $ml={12}><YouTube s={10} /></Icon><Text {...bm} ml={6} w={32}>YouTube</Text>
      <Icon $s={10} $ml={12}><svg width="10" height="11" viewBox="0 0 10 11"><path d="M5 11C4 8 1.500 6.500 1.500 3.800 1.500 2 3 .5 5 .5s3.500 1.500 3.500 3.300C8.500 6.500 6 8 5 11z" fill="#34a853" /><path d="M5 .5C3 .5 1.500 2 1.500 3.800L5 3.800z" fill="#4285f4" /><path d="M8.500 3.500L5 6l-.5 3C6 7 8.500 6 8.500 3.500z" fill="#fbbc04" /><circle cx="5" cy="3.800" r="1.200" fill="#fff" /></svg></Icon><Text {...bm} ml={6} w={21}>Maps</Text>
      <Icon $s={10} $ml={12}><GmailLogo s={10} /></Icon><Text {...bm} ml={6} w={22}>Gmail</Text>
      <Icon $s={10} $ml={12}><svg width="11" height="11" viewBox="0 0 11 11"><rect x="4" y="3" width="7" height="8" fill="#d5d8dc" /><rect width="7.500" height="8.500" rx="1" fill="#4a86e8" /><path d="M5.300 3A2 2 0 1 0 5.500 5H4M7 6h3M8.500 5.500v1q0 2-1.500 3" fill="none" stroke="#fff" strokeWidth=".8" /></svg></Icon><Text {...bm} ml={6} w={31}>Traduire</Text>
      <Icon $s={11} $ml={11} $color="#e8702e"><FaGitlab size={11} /></Icon><Text {...bm} ml={5.5} w={75}>Projects - Dashbo...</Text>
      <Icon $s={11} $ml={14}><FaGithub size={11} /></Icon><Text {...bm} ml={5} w={76}>okhttp-aws-signe...</Text>
      <Icon $s={11} $ml={13.5}><FaGithub size={11} /></Icon><Text {...bm} ml={5} w={76}>okhttp-aws-signe...</Text>
      <Icon $s={11} $ml={13.5}><FaGithub size={11} /></Icon><Text {...bm} ml={5} w={75.5}>aws-sdk-android/...</Text>
      <Icon $s={11} $ml={13}><svg width="10" height="11" viewBox="0 0 10 11"><path d="M0 1.500h10v2H0zM1 4h8v6.500H1z" fill="#d9a13c" /><path d="M4.300 0h1.400v11H4.300z" fill="#a97420" /></svg></Icon><Text {...bm} ml={6} w={74.5}>CloudFormation -...</Text>
      <Push />
      <Text {...bm} w={5}>»</Text>
      <Rule $h={13} $ml={8} $c="#65676b" />
      <Icon $s={10} $ml={7}><svg width="10" height="10" viewBox="0 0 10 10" fill="none" stroke="currentColor" strokeWidth=".9"><rect x=".5" y=".5" width="9" height="9" /><path d="M2 3h1M4 3h4M2 5h1M4 5h4M2 7h1M4 7h4" /></svg></Icon>
      <Text {...bm} ml={6} w={60}>Liste de lecture</Text>
      <Rule $h={1} $ml={9} $c="transparent" />
    </Bookmarks>
  </>
);

const jn = { family: INTER, size: 9.6, weight: 500, lh: 13, color: '#44526c' };
const Gear = ({ s = 13, sw = 2 }) => (
  <svg width={s} height={s} viewBox="0 0 14 14"><circle cx="7" cy="7" r="4.400" fill="none" stroke="currentColor" strokeWidth={sw} /><circle cx="7" cy="7" r="6" fill="none" stroke="currentColor" strokeWidth="1.500" strokeDasharray="2.360 2.360" /></svg>
);
const NavChevron = () => <Icon $s={6} $ml={3} $color="#8c96a8"><Chevron sw={1.3} /></Icon>;
const JiraNavBar = () => (
  <JiraNav>
    <Icon $s={11}><AppsDots s={11} /></Icon>
    <Icon $s={11} $ml={10}><JiraMark s={11.5} /></Icon>
    <Text {...jn} size={11.8} weight={400} ml={4.5} w={76.5} lh={15} color="#3a4963">Jira Software</Text>
    <Text {...jn} ml={20.5} w={45}>Your work</Text>
    <NavActive><Text {...jn} color="#2458bd" w={37}>Projects</Text><Icon $s={6} $ml={3} $color="#6b90d8"><Chevron sw={1.3} /></Icon></NavActive>
    <Text {...jn} ml={12} w={27.5}>Filters</Text><NavChevron />
    <Text {...jn} ml={13.5} w={54}>Dashboards</Text><NavChevron />
    <Text {...jn} ml={13.5} w={30.5}>People</Text><NavChevron />
    <Text {...jn} ml={13.5} w={23}>Apps</Text><NavChevron />
    <CreateButton><Text {...jn} weight={600} color="#fff" w={30}>Create</Text></CreateButton>
    <Push />
    <SearchBox $w={136.5} $h={21}><Icon $s={11} $ml={4.5}><MdSearch size={11} /></Icon><Text {...jn} weight={400} color="#6c7686" ml={5.500} w={30}>Search</Text></SearchBox>
    <Icon $s={12} $ml={9.500} $color="#344563"><svg width="12" height="12" viewBox="0 0 12 12" fill="currentColor"><path d="M11.500.5C8 .5 6 2 4.500 4L1.500 4.500 0 7.500l2-.2 2.500 2.500L4.500 12l3-1.700.3-3C10 6 11.500 4 11.500.5zM1.500 9L0 11.800 3 11z" /></svg></Icon>
    <Icon $s={14} $ml={14.500} $color="#344563"><Initial $s={14} $f={11} $bg="#344563" $weight={700}>?</Initial></Icon>
    <Icon $s={14} $ml={13} $color="#344563"><Gear s={13} /></Icon>
    <Initial $s={16} $f={8} $ml={14.500} $bg="#1553c7" $weight={700}>R</Initial>
    <Rule $h={1} $ml={15.500} $c="transparent" />
  </JiraNav>
);

const SI = ({ d, sw = 1.6 }) => <Stroke s={14} vb={14} sw={sw} d={d} cap="square" />;
const extLink = 'M5.500 2H1.500v11h11V9M8.500 1.500h4.500v4.500M12.500 2L7 7.500';
const sideItems = [
  ['Roadmap', 42, 28, 0, 'M2.500 1.200h6q1.200 0 1.200 1.300t-1.200 1.300h-6q-1.200 0-1.200-1.300t1.200-1.300zM6 5.700h6q1.200 0 1.200 1.300T12 8.300H6Q4.800 8.300 4.800 7T6 5.700zM3 10.200h4.500q1.200 0 1.200 1.300t-1.200 1.300H3q-1.200 0-1.200-1.300T3 10.200z'],
  ['Backlog', 35.5, 27, 0, 'M2 1.500h9.500v2.500H2zM1 5.500h12M2 8.500h10M2 5.500v7h10v-3', 'on'],
  ['Board', 26, 28, 0, 'M1 2h12v10H1zM5 2v10M9 2v10'],
  ['Reports', 34.5, 29, 0, 'M1 2.500v9.500h12M3.500 8.500L6 6l2 1.500L12 4M9.500 4H12v2.500'],
  ['Project pages', 60.5, 29, 0, 'M2.500 1h9v12h-9zM5 4h4M5 6.500h4M5 9h2'],
  ['Redmine', 38.5, 29, 0, extLink],
  ['Rétro Itération 30', 77.5, 30, 0.5, extLink, 'hover'],
  ['Checklist', 41, 31, 3, 'M1.500 1.500h11v11h-11zM4.500 6.500l2 2 3.500-4'],
  ['Add item', 39.5, 31, 0.5, 'M8.500 2H1.500v11h11V6.500M12 1v3.500M10.300 2.700h3.500'],
];
const it = { family: INTER, size: 9.4, weight: 400, lh: 13 };

const Sidebar = () => (
  <Side>
    <ProjectHead>
      <svg width="17" height="17" viewBox="0 0 17 17"><rect width="17" height="17" rx="2" fill="#1c3a55" /><path d="M14 3c-4 0-6 2-7.500 4.500L4 8.500l2 1 1.500 1.500 1 2 1-2.500C12 9 14 7 14 3z" fill="#9fd4e4" /><path d="M5 11l-2 3 3-1.500z" fill="#4fb3cc" /></svg>
      <ProjectNames>
        <Text {...it} weight={600} color="#42526e" w={50.5} lh={12}>Plateforme</Text>
        <Text {...it} size={8.2} color="#66728a" w={102} lh={12} dy={-0.5}>Next-gen software project</Text>
      </ProjectNames>
    </ProjectHead>
    <Collapse><Stroke s={7} vb={7} sw={1.3} d="M4.200 1.500L2.400 3.500l1.800 2" /></Collapse>
    {sideItems.map(([label, w, h, mt, d, state]) => (
      <SideItem key={label} $h={h} $mt={label === 'Roadmap' ? -15 : mt} $bg={!!state} $blue={state === 'on'}>
        <Icon $s={14}><SI d={d} sw={1.4} /></Icon>
        <Text {...it} color={state === 'on' ? '#2255b8' : '#42526e'} weight={state === 'on' ? 500 : 400} ml={11.5} w={w} dy={0.8}>{label}</Text>
        {state === 'hover' && <Icon $s={13} $ml={20} $color="#7a8494"><MdEdit size={14} /></Icon>}
      </SideItem>
    ))}
    <SideItem $h={27} $mt={-0.5}><Icon $s={14}><Gear s={13} sw={1.6} /></Icon><Text {...it} color="#42526e" ml={11.5} w={69.5} dy={0.8}>Project settings</Text></SideItem>
    <SideFoot>
      <svg width="16" height="14" viewBox="0 0 16 14"><path d="M0 2.500h5l1.500 1.500H14v9.500H0z" fill="#8f7ee0" /><path d="M12.500 0l.8 2.200L15.500 3l-2.200.8-.8 2.200-.8-2.200L9.500 3l2.200-.8z" fill="#f2ab2c" /></svg>
      <Text {...it} size={8.6} color="#42526e" w={107} dy={1}>You're in a next-gen project</Text>
      <Text {...it} size={8.4} color="#5e6c84" w={44} dy={-1}>Learn more</Text>
    </SideFoot>
  </Side>
);

const V1 = ['RECOMMANDATION V1', 93];
const V2 = ['RECOMMANDATION V2', 94];
const OBJ = ["MODÈLE OBJ À L'ÉCHELLE V1", 118, true];
const DONE = ['DONE', 22, 36, 'done'];
const PROG = ['IN PROGRESS', 52.7, 67, 'prog'];
const TEST = ['A TESTER', 37, 52, 'prog'];
const TODO = ['TO DO', 24, 39, 'todo'];
const issues = [
  ['591', 593, 780, 'Android AR : Ajout de la calibration ArCore', 786, V1, 2, DONE],
  ['585', 594, 717, 'Android : Signature V4 AWS', 723.5, V1, 2, DONE],
  ['571', 592, 1050.5, 'iOS / Back : Ajout des options de catégorie (Type de 3D, Orientation, Translation, Surface, Nb facette, ...', 1061, V2, 2, DONE],
  ['586', 594, 781, 'Android : Implémentation des services API', 787, V1, 3, PROG],
  ['605', 594, 1011, "Chanel : Réaliser le POC sur l'évaluation de la largeur d'un poignet en pixel à l'aide d'algo d'a...", 1022, OBJ, 3, TEST],
  ['589', 594, 866, "Android AR : Ajout de l'AR 3D -> Bannière sur surface vertical", 872, V1, 3, PROG],
  ['592', 594, 771, 'Android AR : Enregistrement des frames', 777, V1, 3, PROG],
  ['606', 594, 799, "Démonstrateur : Reconstruction 3D de l'oreille", 805, OBJ, 1, PROG],
  ['590', 594, 802, 'Android AR: Coloration du bandeau en 2 temps', 808, V1, 2, TODO],
  ['603', 594, 856.5, 'Android AR : Ajouter les contrôles et affichages des erreurs', 862, V1, 2, TODO],
];
const Person = () => <svg width="17" height="17" viewBox="0 0 17 17"><circle cx="8.500" cy="8.500" r="8.500" fill="#bfc4cc" /><circle cx="8.500" cy="5.300" r="2.600" fill="#fff" /><rect x="4.300" y="8" width="8.400" height="6" rx="2" fill="#fff" /></svg>;

const Issue = ({ data, on }) => {
  const [key, x1, x2, title, bx, [epic, ew, green], pts, [label, lw, sw, tone]] = data;
  return (
    <Row $on={on}>
      <Check><Stroke s={8} vb={8} sw={1.4} d="M1.500 4.300l1.700 1.700L6.500 2.200" /></Check>
      <Text {...it} size={9.6} color="#6b778c" ml={6} w={tone === 'done' ? 43 : 44} strike={tone === 'done'}>{`PLAT-${key}`}</Text>
      <Text {...it} size={9.6} color="#253858" ml={x1 - (tone === 'done' ? 587 : 588)} w={x2 - x1}>{title}</Text>
      <Epic $w={ew} $ml={bx - x2} $green={green}><Text family={INTER} size={8} weight={700} lh={14} w={ew - 5} dy={0} color={green ? '#1d6a4a' : '#4436a0'}>{epic}</Text></Epic>
      <Push />
      <CountPill>{pts}</CountPill>
      <Status $w={sw} $tone={tone}><Text family={INTER} size={8} weight={700} lh={12} w={lw} dy={0} color={tones[tone][1]}>{label}</Text><Icon $s={6} $ml={2.500}><Chevron sw={1.4} /></Icon></Status>
      <Icon $s={17} $ml={8}><Person /></Icon>
    </Row>
  );
};

/* the row that the window edge cuts: only the tops of its badge, status and avatar show */
const CutRow = styled.div`
  width: 765px;
  height: 20px;
  display: flex;
  padding: 6px 37px 0 326px;
  background: #fff;
`;
const CutChip = styled.i`
  flex: none;
  width: ${(p) => p.$w}px;
  height: 14px;
  margin-left: ${(p) => p.$ml || 0}px;
  border-radius: 2px;
  background: ${(p) => p.$bg};
`;

const Backlog = () => (
  <Main>
    <Crumbs>
      <Text {...it} color="#6b778c" w={35.5} dy={0}>Projects</Text>
      <Text {...it} color="#6b778c" ml={7} w={4} dy={0}>/</Text>
      <Text {...it} color="#6b778c" ml={6} w={47.5} dy={0}>Plateforme</Text>
    </Crumbs>
    <Heading><Text family={INTER} size={15.5} weight={500} color="#172b4d" lh={20} w={57}>Backlog</Text></Heading>
    <Filters>
      <SearchBox $w={82} $h={27}><Icon $s={11} $ml={63}><MdSearch size={11} /></Icon></SearchBox>
      <Initial $s={22} $f={10} $ml={11} $bg="#1553c7" $weight={700}>R</Initial>
      <svg width="19" height="22" viewBox="0 0 19 22"><path d="M0 1.500A11 11 0 1 1 0 20.500q3-4 3-9.500T0 1.500z" fill="#dfe1e6" /><circle cx="7.500" cy="7.500" r="3" fill="#7e8899" /><rect x="3.500" y="11.500" width="9" height="6" rx="2" fill="#7e8899" /><path d="M11 8.500h4M13 6.500v4" stroke="#7e8899" strokeWidth="1.300" /></svg>
      <Rule $h={12} $ml={10} $c="#e3e5e9" />
      <Text {...it} weight={500} color="#42526e" ml={12.5} w={20}>Epic</Text>
      <Icon $s={7} $ml={6.5} $color="#42526e"><Chevron s={7} /></Icon>
    </Filters>
    <Sprint>
      <SprintHead>
        <Icon $s={7} $color="#253858"><Chevron s={7} sw={1.3} /></Icon>
        <Text {...it} weight={700} color="#253858" ml={5} w={80}>Tableau Sprint 37</Text>
        <Text {...it} color="#6b778c" ml={5} w={70}>29 Mar – 12 Apr</Text>
        <Text {...it} color="#6b778c" ml={6} w={44}>(11 issues)</Text>
        <Push />
        <CountPill>9</CountPill>
        <CountPill $w={17} $ml={3} $bg="#1553c7" $c="#fff">13</CountPill>
        <CountPill $ml={3} $bg="#2f855a" $c="#fff">6</CountPill>
        <GreyButton $w={89} $ml={6}><Text {...it} size={9.6} weight={500} color="#42526e" w={72.5}>Complete sprint</Text></GreyButton>
        <GreyButton $w={21.5} $ml={6}><svg width="13" height="4" viewBox="0 0 13 4" fill="currentColor"><circle cx="2" cy="2" r="1.500" /><circle cx="6.500" cy="2" r="1.500" /><circle cx="11" cy="2" r="1.500" /></svg></GreyButton>
      </SprintHead>
      {issues.map((data, n) => <Issue key={data[0]} data={data} on={n === 0} />)}
      <CutRow>
        <CutChip $w={94} $bg="#eae6fd" />
        <Push />
        <CutChip $w={39} $bg="#dfe1e6" />
        <CutChip $w={17} $ml={8} $bg="transparent"><Person /></CutChip>
      </CutRow>
    </Sprint>
  </Main>
);

const R = ({ f, s = '#0000', children, x = 2, w = 36 }) => <svg width="40" height="40" viewBox="0 0 40 40"><rect x={x} y={x} width={w} height={w} rx={w === 36 ? 7.5 : w / 2} fill={f} stroke={s} />{children}</svg>;
const Finder = () => <R f="#e4edf6"><path d="M9.500 2H22c-2 6-3 12-3 19h5c0 6 0 11 1.500 17h-16Q2 38 2 30.500v-21Q2 2 9.500 2z" fill="#2a8df2" /><path d="M12 12v5M28 12v5" stroke="#14304e" strokeWidth="1.400" /><path d="M8 25q12 9 24 0" fill="none" stroke="#14304e" strokeWidth="1.400" /></R>;
const Safari = () => <R f="#e7ebef"><circle cx="20" cy="20" r="16" fill="#2f86e4" /><circle cx="20" cy="20" r="14" fill="none" stroke="#9cc8f5" strokeDasharray=".7 1.600" strokeWidth="2" /><path d="M31 9L18.500 18.500l3 3z" fill="#e84c3d" /><path d="M9 31l9.500-12.500 3 3z" fill="#f5f5f5" /></R>;
const Settings = () => <R f="#a9b2b4"><circle cx="20" cy="20" r="15" fill="#2c3032" /><circle cx="20" cy="20" r="13.500" fill="none" stroke="#8b9194" strokeWidth="2" strokeDasharray="1.500 1" /><circle cx="20" cy="20" r="10" fill="none" stroke="#8b9194" strokeWidth="1.600" /><circle cx="20" cy="20" r="3" fill="none" stroke="#8b9194" strokeWidth="2" /><path d="M22.500 20H30M18.500 17.500L15 11M18.500 22.500L15 29" stroke="#8b9194" strokeWidth="2" /></R>;
const Slack = () => (
  <R f="#fff" x={1} w={38}><g strokeWidth="5" strokeLinecap="round">
    <path d="M16.500 10.300v.3" stroke="#36c5f0" /><path d="M10.500 17H16.500" stroke="#36c5f0" /><path d="M23 10.500v6.500M29.500 16.800v.3" stroke="#2eb67d" />
    <path d="M16.500 23.500V30M10 23.500v.3" stroke="#e01e5a" /><path d="M23.500 23.500H30M23.500 30v.3" stroke="#ecb22e" /></g></R>
);
const ChromeTile = () => <R f="#f4f4f4"><svg x="4.500" y="4.500" width="31" height="31" viewBox="0 0 48 48"><ChromeLogo s={48} /></svg></R>;
const Android = () => <R f="#f7f9fa" x={1} w={38}><rect x="10" y="13" width="20" height="18" rx="2" fill="#3f74e0" /><path d="M13 14a7 7 0 0 1 14 0z" fill="#3ddc84" /><path d="M15 8l1.500 2M25 8l-1.500 2" stroke="#3ddc84" /><path d="M16 31l4-12 4 12M17.500 26h5" fill="none" stroke="#0f2740" strokeWidth="2" /><rect x="27" y="17" width="3" height="14" fill="#0f2740" /><rect x="10" y="11" width="4" height="4" fill="#0f2740" /></R>;
const Postman = () => <R f="#f2693c" s="#f5e6df" x={1} w={38}><path d="M11 30l9-9 5-8 3 2-6 9-8 6z" fill="#fff" /><circle cx="28.500" cy="11.500" r="3.300" fill="#fff" /><path d="M17 26l9-11" stroke="#f2693c" strokeWidth=".8" /></R>;
const Notes = () => <R f="#f1efe9"><path d="M9.500 2h21Q38 2 38 9.500V11H2V9.500Q2 2 9.500 2z" fill="#f6cc3d" /><path d="M3 19.500h34M3 28.500h34" stroke="#d8d5cc" strokeWidth=".7" /></R>;
const SourceTree = () => <R f="#1a5fe0" x={1} w={38}><path d="M20 10a8.500 8.500 0 0 0-3.500 16.200V31h6v-5A8.500 8.500 0 0 0 20 10z" fill="#fff" /><circle cx="20" cy="18.500" r="3" fill="#1a5fe0" /></R>;
const Xcode = () => <R f="#2b93ea"><rect x="5" y="5" width="30" height="30" rx="5" fill="none" stroke="#8fd0fb" /><path d="M11 29l9-18 9 18M8.500 24h23" fill="none" stroke="#b9e0fb" strokeWidth="2" /><path d="M27 5l3.500 2L17 38l-4-1.500z" fill="#30363d" /><path d="M22 3q8-5 14 2l3 1-1 4-4-2q-5-2-9-1z" fill="#50565c" /></R>;
const MiniWindow = () => <svg width="44" height="40" viewBox="0 0 44 40"><path d="M1 20h40" stroke="#232f3c" strokeWidth="1.600" /><path d="M28 20h9" stroke="#6187d6" strokeWidth="2" /><rect x="27.500" y="26.500" width="13.500" height="13.500" rx="3" fill="#fff" /><svg x="29" y="28" width="10.500" height="10.500" viewBox="0 0 48 48"><ChromeLogo s={48} /></svg></svg>;
const Trash = () => <svg width="34" height="40" viewBox="0 0 34 40"><path d="M3 4h28l-4 33q-10 4-20 0z" fill="#777b7c" /><path d="M8 6l2 30M14 6v32M21 6l-1 32M27 6l-3 30" stroke="#96999a" /><path d="M2 4l4-3 4 2 4-3 5 3 5-3 3 3 4 0 1 3q-15 5-30 0z" fill="#e5e3de" /><path d="M8 3l3 2M19 2l3 4M26 3l-2 2" stroke="#b8473e" /><path d="M13 2l2 3" stroke="#4a9aa8" /></svg>;

const MacDock = () => (
  <DockArea>
    <Dock>
      {[[<Finder />, 1], [<Safari />, 0], [<Settings />, 0], [<Slack />, 1], [<ChromeTile />, 1], [<Android />, 1]].map(([icon, on], n) => <DockItem key={n} $on={on}>{icon}<i /></DockItem>)}
      <DockRule $ml={11} $mr={9} />
      {[<Postman />, <Notes />, <SourceTree />, <Xcode />].map((icon, n) => <DockItem key={n} $on>{icon}<i /></DockItem>)}
      <DockRule $ml={10} $mr={10} />
      <DockItem $w={46}><MiniWindow /></DockItem>
      <DockItem $w={47}><Trash /></DockItem>
    </Dock>
  </DockArea>
);

const SharedScreen = () => (
  <Shared>
    <MacMenuBar />
    <MacWindow>
      <ChromeHeader />
      <JiraNavBar />
      <JiraBody><Sidebar /><Backlog /></JiraBody>
      <StatusUrl><Text family={INTER} size={8.8} lh={13} color="#d7d8da" w={303}>docs.google.com/presentation/d/1N7w2C1clOZ1yXlI8hkSPg109rNpnWbnS/edit</Text></StatusUrl>
      <Quickstart><svg width="9" height="12" viewBox="0 0 9 12" fill="#fff"><path d="M4.500 0a4.300 4.300 0 0 0-2.300 8v1.500h4.600V8A4.300 4.300 0 0 0 4.500 0zM2.600 10.200h3.800v.8q-1.900 1.500-3.800 0z" /></svg><Text family={INTER} size={10.4} weight={500} lh={14} ml={8} w={53} dy={0}>Quickstart</Text></Quickstart>
      <Pointer><svg width="11" height="12" viewBox="0 0 11 12"><path d="M2 1q1-1 2 0l1 3 1-.5 1 .5 1 0 1.500 1 .5 3-1.500 3.500H4.500L1 7q0-1.500 2-.5z" fill="#fff" stroke="#222" strokeWidth=".9" /></svg></Pointer>
    </MacWindow>
    <MacDock />
  </Shared>
);

const tabFont = { family: UBUNTU, size: 14.4, lh: 20 };
const urlFont = { family: UBUNTU, size: 15.2, lh: 22 };

export default function App() {
  return (
    <Desktop>
      <GlobalStyle />
      <TopBar>
        <Text {...tabFont} size={14} weight={500} w={58.500}>Activités</Text>
        <Icon $s={17} $ml={33.500}><FaFirefoxBrowser size={16} /></Icon>
        <Text {...tabFont} size={14} weight={500} ml={6} w={155}>Navigateur Web Firefox</Text>
        <Icon $s={10} $ml={6}><svg width="10" height="6"><path d="M0 0h10L5 5.500z" fill="#eee" /></svg></Icon>
        <Text {...tabFont} size={14} weight={500} ml={657} w={82}>6 avril  18:36</Text>
        <Push />
        <svg width="16" height="14" viewBox="0 0 16 14"><path d="M.5 4Q8-2 15.500 4L8 13.500z" fill="#f2f2f2" /><path d="M2 4.500q6-4 12 0" fill="none" stroke="#1d1d1d" strokeWidth="1" /></svg>
        <Icon $s={14} $ml={12}><SpeakerIcon /></Icon>
        <Icon $s={16} $ml={12}><svg width="16" height="16" viewBox="0 0 16 16"><path d="M4 3L1 8.500h2L2 13l3-6H3z" fill="#f2f2f2" /><rect x="7" y="2" width="8" height="13" rx="1" fill="none" stroke="#f2f2f2" strokeWidth="1.500" /><rect x="9.500" y="0" width="3" height="2" fill="#f2f2f2" /><rect x="8.800" y="5.500" width="4.400" height="8" fill="#f2f2f2" /></svg></Icon>
        <Icon $s={10} $ml={11}><svg width="10" height="6"><path d="M0 0h10L5 5.500z" fill="#eee" /></svg></Icon>
        <Rule $h={1} $ml={2.500} $c="transparent" />
      </TopBar>
      <Below>
        <Launcher>
          {launcher.map(([icon, on, active], n) => (
            <LaunchItem key={n} $active={active}><RunDot $on={on} /><Icon $s={48}>{icon}</Icon></LaunchItem>
          ))}
          <AppsGrid>{[...Array(9).keys()].map((n) => <i key={n} />)}</AppsGrid>
        </Launcher>
        <Browser>
          <TabStrip>
            {tabs.map((tab, n) => (
              <Tab key={n} $active={tab.active} $plain={n === 5 || tab.active}>
                {tab.disc ? <GoogleDisc><FcGoogle size={14} /></GoogleDisc> : <Icon $s={16}>{tab.icon}</Icon>}
                <TitleArea $w={tab.active ? 134 : 149}>
                  <Text {...tabFont} color={tab.active ? '#333' : '#f0f0f0'} w={tab.w} fade={tab.fade} from={tab.from}>{tab.t}</Text>
                </TitleArea>
                {tab.active && <Icon $s={14} $ml={2} $color="#555"><SpeakerIcon /></Icon>}
                <Icon $s={10} $ml={tab.active ? 5.5 : 6} $color={tab.active ? '#555' : '#d6d6d6'}><CloseX /></Icon>
              </Tab>
            ))}
            <WinControls>
              <Icon $s={14} $ml={9}><Stroke s={14} vb={14} sw={2} d="M7 1v12M1 7h12" /></Icon>
              <Push />
              <Icon $s={9} $h={12}><svg width="9" height="12"><path d="M0 10h9" stroke="#eee" strokeWidth="1.500" /></svg></Icon>
              <Icon $s={9} $ml={25}><svg width="9" height="9" viewBox="0 0 9 9" fill="none" stroke="#eee" strokeWidth="1.100"><rect x="1" y="3" width="5" height="5.300" /><path d="M3 .8h5.300v5.500" strokeWidth=".8" /></svg></Icon>
              <CloseDisc><CloseX s={8} sw={1.800} /></CloseDisc>
            </WinControls>
          </TabStrip>
          <Toolbar>
            <BackDisc><Stroke s={16} sw={1.900} d="M8 2L2 8l6 6M2 8h13" /></BackDisc>
            <Icon $s={16} $ml={8}><Stroke s={16} d="M8 2l6 6-6 6M14 8H1" /></Icon>
            <Icon $s={16} $ml={16}><svg width="16" height="16" viewBox="0 0 16 16"><path d="M13 11.500A6.200 6.200 0 1 1 12.500 4" fill="none" stroke="currentColor" strokeWidth="2" /><path d="M15.500.8v6.400H9z" fill="currentColor" /></svg></Icon>
            <Icon $s={16} $ml={16}><Stroke s={16} d="M1 8.500l7-7 7 7M3.500 7.500V15h9V7.500M7 15v-4.500h2V15M12 2v3" sw={1.900} /></Icon>
            <UrlBar>
              <Icon $s={14} $ml={7}><svg width="14" height="14" viewBox="0 0 14 14"><path d="M7 .8q2.500 1.400 5.200 1.400V6Q12 11 7 13.200 2 11 1.800 6V2.200Q4.500 2.200 7 .8z" fill="none" stroke="currentColor" strokeWidth="1.500" /><path d="M7 3.500v7Q4.500 9 4.500 6V4Q6 4 7 3.500z" fill="currentColor" /></svg></Icon>
              <Rule $h={22} $ml={7} $c="#c4c4c4" />
              <Icon $s={14} $ml={7}><svg width="14" height="14" viewBox="0 0 14 14"><rect x="1.500" y="6" width="11" height="8" rx="1" fill="currentColor" /><path d="M4 6.500V4a3 3 0 0 1 6 0v2.500" fill="none" stroke="currentColor" strokeWidth="1.900" /></svg></Icon>
              <Icon $s={15} $ml={8}><svg width="15" height="12" viewBox="0 0 15 12" fill="none" stroke="currentColor" strokeWidth="1.700"><circle cx="3" cy="3" r="2" /><path d="M7.500 3H14M1 9h6.500" /><circle cx="12" cy="9" r="2" /></svg></Icon>
              <UrlText>
                <Text {...urlFont} color="#7d7d7d" w={93.500}>https://meet.</Text>
                <Text {...urlFont} color="#0c0c0d" w={81}>google.com</Text>
                <Text {...urlFont} color="#7d7d7d" w={689.500}>/qhm-dyyu-pda?fbclid=IwAR2o08s2jxaLZTCdgmR1lxxjpG6Cc5Y1W8peNc9wT2SUqJxdATgKH5K5Iso</Text>
              </UrlText>
              <Push />
              <Icon $s={16}><svg width="16" height="4" fill="currentColor"><circle cx="2" cy="2" r="2" /><circle cx="8" cy="2" r="2" /><circle cx="14" cy="2" r="2" /></svg></Icon>
              <Icon $s={16} $ml={12}><Stroke s={16} sw={1.800} d="M2 1.500h12q1 0 1 1V7a7 7 0 0 1-14 0V2.500q0-1 1-1zM4.800 6L8 9l3.200-3" /></Icon>
              <Icon $s={16} $ml={12}><Stroke s={16} sw={1.700} d="M8 1l2.100 4.700 5 .5-3.800 3.400 1.100 5L8 12l-4.400 2.600 1.100-5L.9 6.200l5-.5z" /></Icon>
              <Rule $h={1} $ml={5} $c="transparent" />
            </UrlBar>
            <Push />
            <Icon $s={16}><Stroke s={16} sw={2} cap="butt" d="M2 1v14M5.500 1v14M9 1v14M11 2l4 12.500" /></Icon>
            <Icon $s={16} $ml={16}><svg width="16" height="14" viewBox="0 0 16 14" fill="none" stroke="currentColor" strokeWidth="1.800"><rect x="1" y="1" width="14" height="12" rx="2" /><path d="M8 1v12M3 4h3M3 6.500h3M3 9h2" strokeWidth="1.300" /></svg></Icon>
            <Icon $s={15} $ml={16}><svg width="15" height="15" viewBox="0 0 15 15"><circle cx="7.500" cy="7.500" r="6.700" fill="none" stroke="currentColor" strokeWidth="1.300" /><circle cx="7.500" cy="5.500" r="2.700" fill="currentColor" /><path d="M3.300 10Q7.500 7.500 11.700 10 10 12.700 7.500 12.700T3.300 10z" fill="currentColor" /></svg></Icon>
            <Rule $h={34} $ml={11} $c="#d8d8d8" />
            <Icon $s={14} $ml={15}><Stroke s={14} vb={14} sw={2} cap="butt" d="M1 2h12M1 7h12M1 12h12" /></Icon>
            <Rule $h={1} $ml={11} $c="transparent" />
          </Toolbar>
          <Meeting>
            <Stage>
              <Presenter>
                <Initial $s={36} $f={19}>R</Initial>
                <Text size={18} lh={24} ml={16} w={170.500} color="#f4f4f4">Raya Hadhri présente</Text>
              </Presenter>
              <SharedScreen />
              <Participant>
                <Initial $s={135} $f={73}>R</Initial>
                <NameRow><MutedBadge><MdMicOff size={16} color="#fff" /></MutedBadge><Text size={15} lh={20} ml={8} w={75.500} dy={0}>Raya Hadhri</Text></NameRow>
              </Participant>
            </Stage>
            <Panel>
              <PanelHead>
                <Text size={17.5} lh={24} w={215} color="#202124">Informations sur la réunion</Text>
                <MdClose size={21} color="#5f6368" />
              </PanelHead>
              <PanelTabs>
                <PanelTab>
                  <Icon $s={24}><svg width="24" height="20" viewBox="0 0 24 20" fill="none" stroke="#5f6368" strokeWidth="2"><circle cx="9" cy="5.500" r="3.400" /><path d="M2 18v-2.500Q4 12.500 9 12.500t7 3V18zM14 2a3.600 3.600 0 0 1 0 7M18 12.800q4 1.200 4 3.700V19h-3.500" /></svg></Icon>
                  <Text size={15} weight={500} lh={20} ml={5} w={102.500} dy={0} color="#5f6368">Participants (3)</Text>
                </PanelTab>
                <ChatTab>
                  <ChatLabel>
                    <Icon $s={21}><svg width="20" height="20" viewBox="0 0 20 20"><path d="M2 0h16q2 0 2 2v12q0 2-2 2H4l-4 4V2q0-2 2-2z" fill="#00796b" /></svg></Icon>
                    <Text size={15} weight={500} lh={20} ml={7} w={32} dy={0} color="#00796b">Chat</Text>
                  </ChatLabel>
                  <Underline />
                </ChatTab>
              </PanelTabs>
              <Messages>
                <MsgHead><Text size={13} weight={700} lh={20} w={29} color="#202124">Vous</Text><Text size={13} lh={20} ml={9} w={29.500} color="#5f6368">18:04</Text></MsgHead>
                <Msg>micro</Msg>
                <Msg>fel ubuntu</Msg>
                <Msg>cv pas</Msg>
                <Msg>hahahahahahaahaha</Msg>
                <Msg>hahahahahaah</Msg>
                <Msg>{'h'.repeat(49)}</Msg>
              </Messages>
              <Composer>
                <Field><Text size={13} lh={18} w={215} dy={0} color="#9aa0a6">Envoyer un message aux participants</Text></Field>
                <Icon $s={21} $ml={25}><svg width="20" height="18" viewBox="0 0 20 18"><path d="M1.200 1.500L18 9 1.200 16.500V10.500L11 9 1.200 7.500z" fill="none" stroke="#e4e6e9" strokeWidth="2" /></svg></Icon>
              </Composer>
            </Panel>
          </Meeting>
          <Controls>
            <Text size={17.5} lh={24} w={215} color="#3c4043">Informations sur la réunion</Text>
            <Icon $s={14} $ml={13} $color="#5f6368"><Stroke s={14} vb={14} sw={2} cap="butt" d="M1.500 9.500L7 4l5.500 5.500" /></Icon>
            <RoundButton $ml={557.5} $color="#5f6368"><MdMicNone size={24} /></RoundButton>
            <RoundButton $ml={16} $color="#d93025"><MdCallEnd size={26} /></RoundButton>
            <RoundButton $ml={16} $red $color="#fff"><MdOutlineVideocamOff size={26} /></RoundButton>
            <PresentBlock>
              <svg width="22" height="18" viewBox="0 0 22 18"><rect x="1" y="1" width="20" height="16" rx="1.500" fill="none" stroke="#5f6368" strokeWidth="2" /><path d="M11 4.500l4 4.200h-3V13h-2V8.700H7z" fill="#5f6368" /></svg>
              <Text size={13.5} weight={500} lh={18} dy={7} w={72} color="#3c4043">Raya Hadhri</Text>
              <Text size={13.5} weight={500} lh={18} dy={7} w={53} color="#3c4043">présente</Text>
            </PresentBlock>
            <Icon $s={20} $ml={53} $color="#3c4043"><svg width="4" height="16" fill="currentColor"><circle cx="2" cy="2" r="2" /><circle cx="2" cy="8" r="2" /><circle cx="2" cy="14" r="2" /></svg></Icon>
          </Controls>
        </Browser>
      </Below>
    </Desktop>
  );
}
